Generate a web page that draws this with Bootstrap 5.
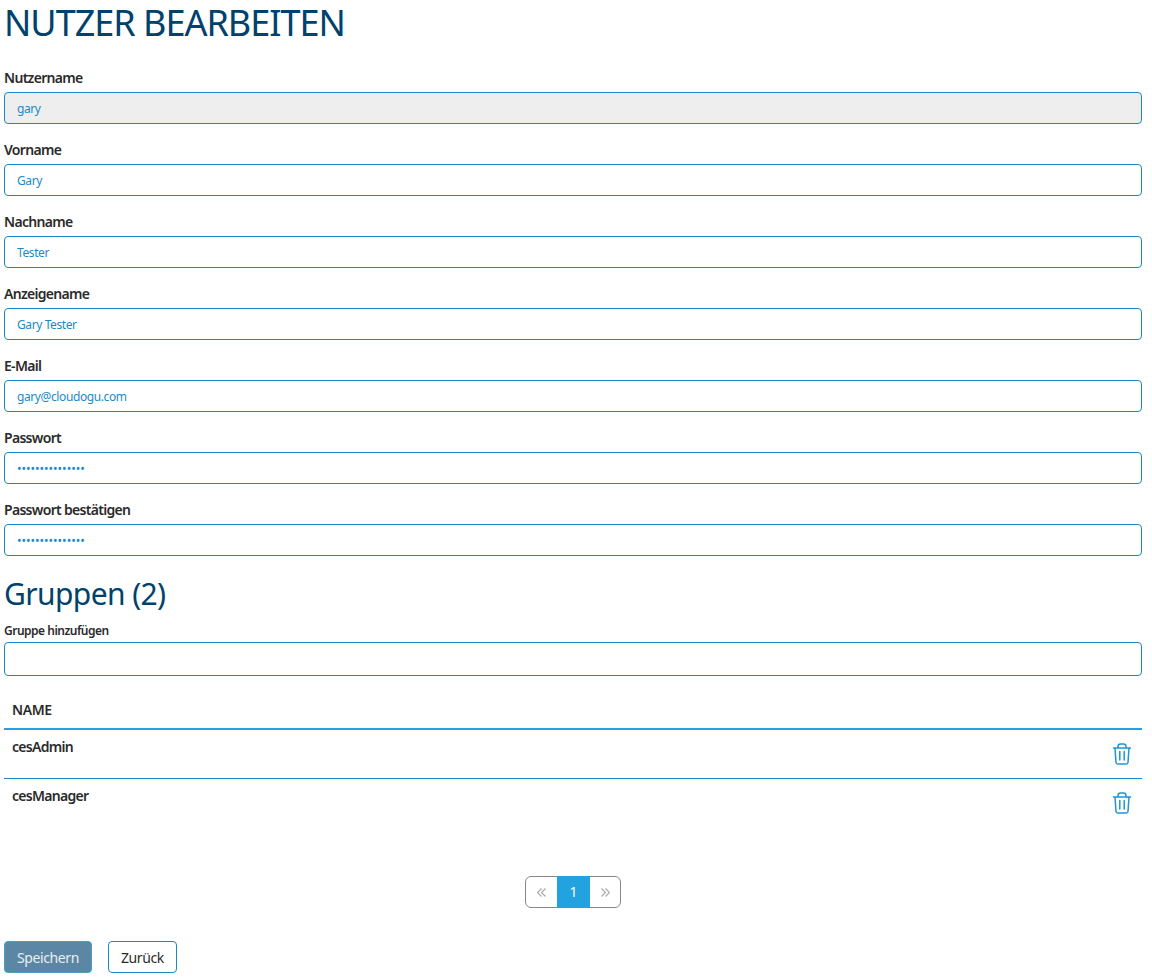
<!DOCTYPE html>
<html lang="de">
<head>
  <meta charset="UTF-8">
  <title>Nutzer bearbeiten</title>
  <link href="https://cdn.jsdelivr.net/npm/bootstrap@5.3.0/dist/css/bootstrap.min.css" rel="stylesheet">
  <style>
    body {
      background: #fff;
      color: #2b2b2b;
      font-family: "Noto Sans", "Open Sans", sans-serif;
      font-size: 14px;
    }
    .page-wrap {
      padding: 0 10px 0 4px;
    }
    .page-title {
      color: #00426b;
      font-size: 36px;
      font-weight: 400;
      letter-spacing: -1px;
      line-height: 46px;
      margin: 0 0 21px;
      text-transform: uppercase;
    }
    .field-block {
      margin-bottom: 15px;
    }
    .field-label {
      display: block;
      font-size: 14px;
      font-weight: 600;
      letter-spacing: -0.7px;
      line-height: 20px;
      margin-bottom: 4px;
      margin-top: -1px;
      padding-top: 2px;
    }
    .field-input.form-control {
      border: 1px solid #1a8ac6;
      border-radius: 4px;
      color: #1a8ac6;
      font-size: 12px;
      height: 32px;
      letter-spacing: -0.4px;
      line-height: 18px;
      padding: 6px 12px;
    }
    .field-input.form-control:disabled {
      background: #eee;
    }
    .field-input.pw-input {
      letter-spacing: 0;
    }
    .group-title {
      color: #00426b;
      font-size: 30px;
      font-weight: 400;
      letter-spacing: -0.6px;
      line-height: 38px;
      margin: 19px 0 9px;
    }
    .add-label {
      display: block;
      font-size: 12px;
      font-weight: 600;
      letter-spacing: -0.5px;
      line-height: 17px;
      margin-bottom: 3px;
    }
    .add-input.form-control {
      border: 1px solid #1a8ac6;
      border-radius: 4px;
      height: 34px;
    }
    .group-table {
      margin: 16px 0 0;
    }
    .group-table th {
      border-bottom: 2px solid #22a3e0;
      color: #2b2b2b;
      font-size: 14px;
      font-weight: 600;
      height: 37px;
      letter-spacing: -0.4px;
      line-height: 20px;
      padding: 8px;
      text-transform: uppercase;
    }
    .group-table td {
      border-bottom: 1px solid #1a8ac6;
      color: #2b2b2b;
      font-size: 14px;
      font-weight: 600;
      height: 49px;
      letter-spacing: -0.7px;
      line-height: 18px;
      padding: 8px;
      vertical-align: top;
    }
    .group-table tr:last-child td {
      border-bottom: 0;
    }
    .trash-cell {
      text-align: right;
      width: 60px;
    }
    .trash-icon {
      display: inline-block;
      height: 22px;
      margin: 5px 2px 0 0;
      width: 20px;
    }
    .pager-wrap {
      margin: 49px 0 33px;
    }
    .pager-wrap .page-link {
      align-items: center;
      border-color: #888;
      color: #999;
      display: flex;
      font-size: 14px;
      height: 32px;
      justify-content: center;
      line-height: 20px;
      padding: 0;
      width: 33px;
    }
    .pager-wrap .page-item:last-child .page-link {
      width: 32px;
    }
    .pager-wrap .page-item.active .page-link {
      background: #22a3e0;
      border-color: #22a3e0;
      color: #fff;
    }
    .chevrons {
      height: 9px;
      width: 9px;
    }
    .save-btn.btn {
      background: #5b87a5;
      border: 1px solid #4f9cc5;
      border-radius: 4px;
      color: #e8eef3;
      font-size: 14px;
      height: 32px;
      letter-spacing: -0.4px;
      line-height: 20px;
      padding: 6px 12px 4px;
    }
    .back-btn.btn {
      background: #fff;
      border: 1px solid #1a8ac6;
      border-radius: 4px;
      color: #2b2b2b;
      font-size: 14px;
      height: 32px;
      letter-spacing: -0.4px;
      line-height: 20px;
      padding: 6px 12px 4px;
    }
  </style>
</head>
<body>

<div class="page-wrap">
  <h1 class="page-title">Nutzer bearbeiten</h1>

  <form>
    <div class="field-block">
      <label class="field-label" for="username">Nutzername</label>
      <input id="username" class="form-control field-input" value="gary" disabled>
    </div>
    <div class="field-block">
      <label class="field-label" for="firstname">Vorname</label>
      <input id="firstname" class="form-control field-input" value="Gary">
    </div>
    <div class="field-block">
      <label class="field-label" for="lastname">Nachname</label>
      <input id="lastname" class="form-control field-input" value="Tester">
    </div>
    <div class="field-block">
      <label class="field-label" for="displayname">Anzeigename</label>
      <input id="displayname" class="form-control field-input" value="Gary Tester">
    </div>
    <div class="field-block">
      <label class="field-label" for="email">E-Mail</label>
      <input id="email" class="form-control field-input" value="gary@cloudogu.com">
    </div>
    <div class="field-block">
      <label class="field-label" for="password">Passwort</label>
      <input id="password" type="password" class="form-control field-input pw-input" value="123456789012345">
    </div>
    <div class="field-block">
      <label class="field-label" for="confirm">Passwort bestätigen</label>
      <input id="confirm" type="password" class="form-control field-input pw-input" value="123456789012345">
    </div>

    <h2 class="group-title">Gruppen (2)</h2>
    <label class="add-label" for="addgroup">Gruppe hinzufügen</label>
    <input id="addgroup" class="form-control add-input">

    <table class="table table-borderless group-table">
      <thead>
        <tr><th>Name</th><th></th></tr>
      </thead>
      <tbody>
        <tr>
          <td>cesAdmin</td>
          <td class="trash-cell">
            <svg class="trash-icon" viewBox="0 0 20 22" fill="none" stroke="#1f96d2" stroke-width="1.5" stroke-linecap="round" stroke-linejoin="round">
              <path d="M1.5 5h17M3 5l1 14.5q.2 1.5 1.7 1.5h8.6q1.5 0 1.7-1.5L17 5M6 5V3.5Q6 1 8.5 1h3Q14 1 14 3.5V5M7.8 8.5v8.5M12.2 8.5v8.5"/>
            </svg>
          </td>
        </tr>
        <tr>
          <td>cesManager</td>
          <td class="trash-cell">
            <svg class="trash-icon" viewBox="0 0 20 22" fill="none" stroke="#1f96d2" stroke-width="1.5" stroke-linecap="round" stroke-linejoin="round">
              <path d="M1.5 5h17M3 5l1 14.5q.2 1.5 1.7 1.5h8.6q1.5 0 1.7-1.5L17 5M6 5V3.5Q6 1 8.5 1h3Q14 1 14 3.5V5M7.8 8.5v8.5M12.2 8.5v8.5"/>
            </svg>
          </td>
        </tr>
      </tbody>
    </table>

    <nav class="pager-wrap">
      <ul class="pagination justify-content-center mb-0">
        <li class="page-item">
          <a class="page-link" href="#" aria-label="Zurück">
            <svg class="chevrons" viewBox="0 0 9 9" fill="none" stroke="#aaa" stroke-width="1.2"><path d="M4.5.5l-4 4 4 4M8.5.5l-4 4 4 4"/></svg>
          </a>
        </li>
        <li class="page-item active"><a class="page-link" href="#">1</a></li>
        <li class="page-item">
          <a class="page-link" href="#" aria-label="Weiter">
            <svg class="chevrons" viewBox="0 0 9 9" fill="none" stroke="#aaa" stroke-width="1.2"><path d="M.5.5l4 4-4 4M4.5.5l4 4-4 4"/></svg>
          </a>
        </li>
      </ul>
    </nav>

    <div class="d-flex gap-3">
      <button type="button" class="btn save-btn">Speichern</button>
      <button type="button" class="btn back-btn">Zurück</button>
    </div>
  </form>
</div>

<script src="https://cdn.jsdelivr.net/npm/bootstrap@5.3.0/dist/js/bootstrap.bundle.min.js"></script>
</body>
</html>
